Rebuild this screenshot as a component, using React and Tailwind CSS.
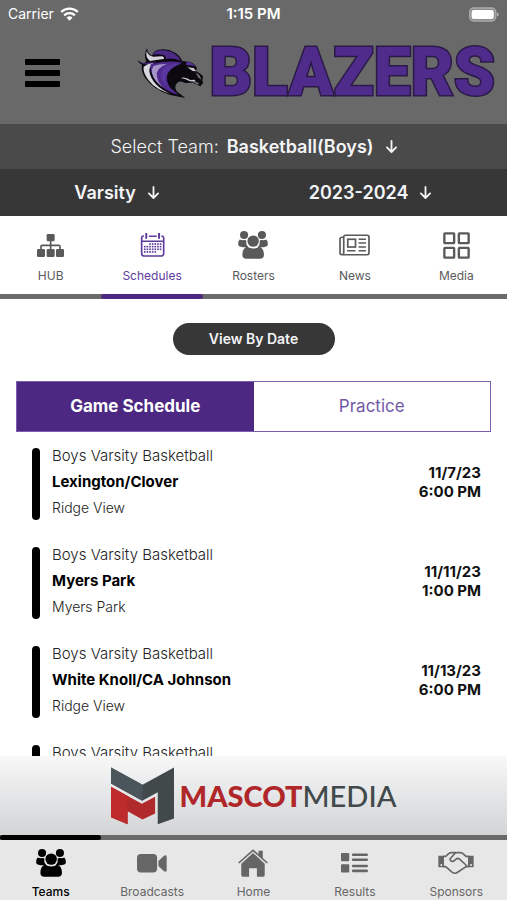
import React, { useState } from "react";

function Wifi() {
  return (
    <svg viewBox="0 0 56 42" className="h-3.5 w-[19px]" fill="none" stroke="#fff" strokeWidth="7" aria-hidden="true">
      <path d="M3 15a36 36 0 0 1 50 0" />
      <path d="M12 25a23 23 0 0 1 32 0" />
      <path d="M28 41l-9-9a13 13 0 0 1 18 0z" fill="#fff" stroke="none" />
    </svg>
  );
}

function Battery() {
  return (
    <svg viewBox="0 0 92 46" className="h-[15px] w-[30px]" aria-hidden="true">
      <rect x="2" y="3" width="80" height="40" rx="12" fill="#8d8d8d" stroke="#aaa" strokeWidth="4" />
      <rect x="8" y="9" width="68" height="28" rx="6" fill="#fff" />
      <path d="M85 17q7 2 7 6t-7 6z" fill="#aaa" />
    </svg>
  );
}

function HorseLogo() {
  return (
    <svg viewBox="32 54 204 156" className="h-[52px] w-[68px] shrink-0" aria-hidden="true">
      <path d="M35 93q9 14 25 6-9-22 2-41 2 18 15 22 4-15 20-18 26-5 47 8 19 11 23 26l22 2q16 4 23 20l-3 8q14 8 21 16l-2 14 3 5-9 11-14-7-10-4-22 1q-13-9-23-1-11 12-2 26l26 20-45-9q-52-17-76-52-13-20-9-39-11-5-12-14z" fill="#0b0810" />
      <path d="M79 78q5-13 22-14 28-2 45 11 14 10 18 20-27-10-46-5 3-12-12-13-13-3-27 1z" fill="#4c2a86" />
      <path d="M61 67q5 14 20 16l26-1q9 3 5 8-23 3-41 6-15-11-10-29z" fill="#d4d2d8" />
      <path d="M39 97q11 9 24 4l30-3q-23 10-37 8-13-2-17-9z" fill="#4c2a86" />
      <path d="M52 113q11-9 29-11-17 13-10 34 7 22 27 38 20 17 47 23-54-10-79-44-17-24-14-40z" fill="#d9d7de" />
      <path d="M73 106q48-14 97-5-35 9-46 33-7 21 8 43l25 20q-45-11-68-42-21-29-16-49z" fill="#4f2b8d" />
      <path d="M83 110q18-6 38-5-35 13-29 38 3 20 21 34-31-20-36-45-2-13 6-22z" fill="#a695c8" />
      <path d="M116 113q21-9 47-9-34 13-44 35-7 18 7 38-20-20-22-36-1-16 12-28z" fill="#5b36a0" />
      <path d="M180 98q17 0 28 14-16-5-28-3z" fill="#57329a" />
      <path d="M183 115l19 2 8 10-11-1zM163 147q14-5 29 6l13-1 3 6-18-1q-14-9-27-10z" fill="#c9c7cd" />
      <path d="M207 130l12 8 7 14-10-6z" fill="#6d6d70" />
      <path d="M195 158q12-2 24 4l-5 5q-8-6-19-9z" fill="#696969" />
    </svg>
  );
}

function HubIcon() {
  return (
    <svg viewBox="107 53 81 69" className="h-[23px] w-[27px]" fill="currentColor" aria-hidden="true">
      <rect x="136" y="53" width="24" height="22" rx="4" />
      <rect x="107" y="98" width="24" height="24" rx="4" />
      <rect x="136" y="98" width="24" height="24" rx="4" />
      <rect x="164" y="98" width="24" height="24" rx="4" />
      <path d="M148 74v25M119 99V90q0-3 3-3h51q3 0 3 3v9" fill="none" stroke="currentColor" strokeWidth="5" />
    </svg>
  );
}

function CalendarIcon() {
  const rows = [83, 91, 99, 107];
  const cols = [433, 441, 449, 457, 465, 473, 481];
  return (
    <svg viewBox="420 52 74 73" className="h-6 w-[25px]" fill="none" stroke="currentColor" aria-hidden="true">
      <path d="M431 61q-7 0-7 7v46q0 8 8 8h51q8 0 8-8V68q0-7-7-7M446 62h24M424 77h67" strokeWidth="5" />
      <path d="M438 54v13M477 54v13" strokeWidth="6" strokeLinecap="round" />
      {rows.map((y, r) =>
        cols.map((x, c) =>
          (r === 0 && c < 2) || (r === 3 && c > 4) ? null : (
            <rect key={x + "-" + y} x={x - 2} y={y} width="5" height="5" fill="currentColor" stroke="none" />
          )
        )
      )}
    </svg>
  );
}

function GroupIcon() {
  return (
    <svg viewBox="110 52 89 83" className="h-7 w-[30px]" fill="currentColor" aria-hidden="true">
      <circle cx="128" cy="64" r="12" />
      <circle cx="181" cy="64" r="12" />
      <path d="M115 77q6 3 13 2 4-1 7 2-2 14 5 18-9 3-22 0-6-1-7-5-2-11 4-17zM194 77q-6 3-13 2-4-1-7 2 2 14-5 18 9 3 22 0 6-1 7-5 2-11-4-17z" />
      <circle cx="155" cy="82" r="17" />
      <path d="M137 98q8 6 18 6t18-6q14 5 14 25 0 11-12 11h-40q-12 0-12-11 0-20 14-25z" />
    </svg>
  );
}

function NewsIcon() {
  return (
    <svg viewBox="255 52 92 64" className="h-[22px] w-[31px]" fill="none" stroke="currentColor" strokeWidth="5" aria-hidden="true">
      <path d="M269 59v49q0 5-5 5-6 0-6-6V66q0-5 6-5h5M264 113h74q6 0 6-6V60q0-5-5-5h-65q-5 0-5 5" />
      <rect x="281" y="67" width="23" height="23" />
      <path d="M313 67h22M313 78h22M313 90h22M279 101h25M313 101h22" />
    </svg>
  );
}

function MediaIcon() {
  return (
    <svg viewBox="568 54 80 80" className="h-[27px] w-[27px]" fill="none" stroke="currentColor" strokeWidth="7" aria-hidden="true">
      <rect x="572" y="58" width="29" height="29" rx="2" />
      <rect x="615" y="58" width="29" height="29" rx="2" />
      <rect x="572" y="101" width="29" height="29" rx="2" />
      <rect x="615" y="101" width="29" height="29" rx="2" />
    </svg>
  );
}

function VideoIcon() {
  return (
    <svg viewBox="409 75 91 57" className="h-[19px] w-[30px]" fill="currentColor" aria-hidden="true">
      <rect x="409" y="75" width="61" height="56" rx="12" />
      <path d="M474 96l17-16q8-4 8 3v41q0 7-8 3l-17-16z" />
    </svg>
  );
}

function HomeIcon() {
  return (
    <svg viewBox="716 60 92 86" className="h-7 w-[30px]" fill="currentColor" aria-hidden="true">
      <path d="M718 103l44-39 44 39" fill="none" stroke="currentColor" strokeWidth="5" />
      <path d="M779 65h13v26l-13-12z" />
      <path d="M762 72l36 33v35q0 5-5 5h-19v-26h-24v26h-19q-5 0-5-5v-35z" />
    </svg>
  );
}

function ResultsIcon() {
  return (
    <svg viewBox="262 71 82 60" className="h-5 w-[27px]" fill="currentColor" aria-hidden="true">
      <rect x="262" y="71" width="25" height="25" rx="3" />
      <rect x="262" y="105" width="25" height="25" rx="3" />
      <path d="M299 76h41M299 91h41M299 110h41M299 125h41" stroke="currentColor" strokeWidth="8" strokeLinecap="round" />
    </svg>
  );
}

function HandshakeIcon() {
  return (
    <svg viewBox="554 61 108 72" className="h-6 w-9" fill="none" stroke="currentColor" strokeWidth="5" strokeLinejoin="round" strokeLinecap="round" aria-hidden="true">
      <path d="M555 75h17v35h-17zM644 75h17v35h-17z" fill="currentColor" stroke="none" />
      <path d="M572 77h5l10-9q3-2 8-2h12M572 108h5l20 17q9 6 17-1l24-16h6M644 77h-6l-10-9q-3-2-8-2h-9q-5 0-8 4l-13 15q2 9 10 7l11-9 6 1 21 19q4 5-2 7" />
      <circle cx="564" cy="103" r="3" fill="#e7e7e7" stroke="none" />
      <circle cx="653" cy="103" r="3" fill="#e7e7e7" stroke="none" />
    </svg>
  );
}

function ArrowDown() {
  return (
    <svg viewBox="0 0 12 14" className="pointer-events-none h-[13px] w-[11px]" fill="none" stroke="currentColor" strokeWidth="2" strokeLinecap="round" strokeLinejoin="round" aria-hidden="true">
      <path d="M6 1v11M1 8l5 5 5-5" />
    </svg>
  );
}

function Picker({ id, label, value }) {
  return (
    <div className="flex items-center gap-3">
      <select
        id={id}
        aria-label={label}
        defaultValue={value}
        className="field-sizing-content appearance-none bg-transparent text-lg font-semibold text-gray-100 outline-none"
      >
        <option>{value}</option>
      </select>
      <ArrowDown />
    </div>
  );
}

const sections = [
  { name: "HUB", Icon: HubIcon },
  { name: "Schedules", Icon: CalendarIcon },
  { name: "Rosters", Icon: GroupIcon },
  { name: "News", Icon: NewsIcon },
  { name: "Media", Icon: MediaIcon },
];

const destinations = [
  { name: "Teams", Icon: GroupIcon },
  { name: "Broadcasts", Icon: VideoIcon },
  { name: "Home", Icon: HomeIcon },
  { name: "Results", Icon: ResultsIcon },
  { name: "Sponsors", Icon: HandshakeIcon },
];

const games = [
  { opponent: "Lexington/Clover", place: "Ridge View", date: "11/7/23", time: "6:00 PM" },
  { opponent: "Myers Park", place: "Myers Park", date: "11/11/23", time: "1:00 PM" },
  { opponent: "White Knoll/CA Johnson", place: "Ridge View", date: "11/13/23", time: "6:00 PM" },
  { opponent: "Spring Valley", place: "Ridge View", date: "11/14/23", time: "6:00 PM" },
];

function Header() {
  return (
    <header className="h-[124px] shrink-0 bg-[#696969]">
      <div className="grid h-7 grid-cols-3 items-center px-2 text-sm text-white">
        <div className="flex items-center gap-1.5">
          <span>Carrier</span>
          <Wifi />
        </div>
        <span className="text-center text-[15px] font-semibold">1:15 PM</span>
        <div className="flex justify-end">
          <Battery />
        </div>
      </div>
      <div className="flex h-[90px] items-center justify-between pr-3 pl-[25px]">
        <button type="button" aria-label="Menu" className="flex w-[35px] flex-col gap-[5px]">
          <span className="h-1.5 rounded-[1px] bg-black" />
          <span className="h-1.5 rounded-[1px] bg-black" />
          <span className="h-1.5 rounded-[1px] bg-black" />
        </button>
        <div className="flex items-center gap-1">
          <HorseLogo />
          <span className="font-['Roboto',sans-serif] text-[66px] leading-[80px] font-black text-[#4f2b8b] [-webkit-text-stroke:3px_#2b1a48] [paint-order:stroke_fill]">
            BLAZERS
          </span>
        </div>
      </div>
    </header>
  );
}

function Game({ opponent, place, date, time }) {
  return (
    <li className="flex h-[99px] items-start gap-3 pr-[26px] pl-8">
      <span className="mt-[5px] h-[72px] w-2 shrink-0 rounded-full bg-black" />
      <div className="flex-1 text-[#222]">
        <p className="text-[15px] leading-[26px] font-light">Boys Varsity Basketball</p>
        <p className="text-[15px] leading-[26px] font-bold text-black">{opponent}</p>
        <p className="text-sm leading-[26px] font-light">{place}</p>
      </div>
      <div className="pt-5 text-right text-[15px] leading-[19px] font-bold text-[#111]">
        <p>{date}</p>
        <p>{time}</p>
      </div>
    </li>
  );
}

function Sponsor() {
  return (
    <div className="flex h-[79px] shrink-0 items-center justify-center gap-1.5 bg-linear-to-b from-[#f8f8f8] to-[#d2d4d6]">
      <svg viewBox="60 83 190 172" className="h-[58px] w-[63px]" aria-hidden="true">
        <path d="M60 83l95 52 95-52v154l-49 17V158l-47 25-94-52z" fill="#41494b" />
        <path d="M60 83l95 52v48l-95-52z" fill="#4b555c" />
        <path d="M60 141l93 51 40-21v51l-38 18-45-25v39l-50-21z" fill="#b12a2b" />
        <path d="M60 141l50 28v85l-50-21z" fill="#bd2b2c" />
      </svg>
      <span className="font-['Lato',sans-serif] text-[29px] leading-8 text-[#41494b]">
        <span className="font-black text-[#b0272a]">MASCOT</span>
        <span className="font-medium">MEDIA</span>
      </span>
    </div>
  );
}

export default function App() {
  const [section, setSection] = useState("Schedules");
  const [destination, setDestination] = useState("Teams");
  const [view, setView] = useState("Game Schedule");

  return (
    <div className="flex h-screen flex-col overflow-hidden bg-white font-['Inter',sans-serif]">
      <Header />
      <div className="flex h-[45px] shrink-0 items-center justify-center gap-2 bg-[#4a4a4a] text-gray-100">
        <label htmlFor="team" className="text-lg font-light text-gray-100">Select Team:</label>
        <Picker id="team" value="Basketball(Boys)" />
      </div>
      <div className="grid h-[47px] shrink-0 grid-cols-[46fr_54fr] place-items-center bg-[#373737] text-gray-100">
        <Picker id="level" label="Level" value="Varsity" />
        <Picker id="season" label="Season" value="2023-2024" />
      </div>

      <nav className="grid shrink-0 grid-cols-5 bg-white" aria-label="Team sections">
        {sections.map(({ name, Icon }) => (
          <button
            key={name}
            type="button"
            onClick={() => setSection(name)}
            className={"flex flex-col items-center text-xs " + (section === name ? "text-[#5e3a9c]" : "text-[#5a5a5a]")}
          >
            <span className="mt-3.5 flex h-[30px] items-center"><Icon /></span>
            <span className="mt-[7px] leading-[18px]">{name}</span>
            <span className="mt-[9px] h-[5px] w-full bg-[#6a6a6a]">
              {section === name && <span className="block h-full rounded-full bg-[#4c2882]" />}
            </span>
          </button>
        ))}
      </nav>

      <main className="min-h-0 flex-1 overflow-y-auto [scrollbar-width:none]">
        <div className="flex justify-center pt-6">
          <button type="button" className="h-8 w-[162px] rounded-full bg-[#373737] text-sm font-semibold text-gray-100">
            View By Date
          </button>
        </div>
        <div className="mx-4 mt-[26px] grid h-[51px] grid-cols-2 border border-[#7a5fae] text-[17px]">
          {["Game Schedule", "Practice"].map((name) => (
            <button
              key={name}
              type="button"
              onClick={() => setView(name)}
              className={view === name ? "bg-[#4c2882] font-bold text-white" : "text-[#7358a8]"}
            >
              {name}
            </button>
          ))}
        </div>
        <ul className="pt-[11px]">
          {games.map((game) => (
            <Game key={game.date} {...game} />
          ))}
        </ul>
      </main>

      <Sponsor />

      <nav className="grid shrink-0 grid-cols-5 bg-[#e7e7e7]" aria-label="Main">
        {destinations.map(({ name, Icon }) => (
          <button
            key={name}
            type="button"
            onClick={() => setDestination(name)}
            className={"flex flex-col items-center text-xs " + (destination === name ? "font-medium text-black" : "text-[#666]")}
          >
            <span className="h-[5px] w-full bg-[#6a6a6a]">
              {destination === name && <span className="block h-full rounded-full bg-black" />}
            </span>
            <span className="mt-1.5 flex h-[34px] items-center"><Icon /></span>
            <span className="mt-1 leading-4">{name}</span>
          </button>
        ))}
      </nav>
    </div>
  );
}
